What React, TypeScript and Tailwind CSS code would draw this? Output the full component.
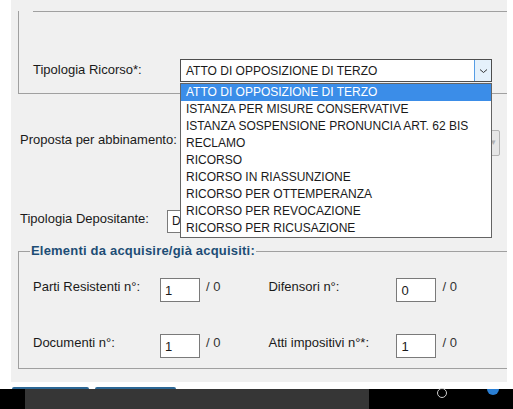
import React from 'react';

const ricorsoOptions = [
  'ATTO DI OPPOSIZIONE DI TERZO',
  'ISTANZA PER MISURE CONSERVATIVE',
  'ISTANZA SOSPENSIONE PRONUNCIA ART. 62 BIS',
  'RECLAMO',
  'RICORSO',
  'RICORSO IN RIASSUNZIONE',
  'RICORSO PER OTTEMPERANZA',
  'RICORSO PER REVOCAZIONE',
  'RICORSO PER RICUSAZIONE',
];

const Chevron: React.FC = () => (
  <svg width="9" height="6" viewBox="0 0 9 6" fill="none">
    <path d="M1 1.5 L4.5 4.5 L8 1.5" stroke="#333" strokeWidth="1" />
  </svg>
);

const CountField: React.FC<{ label: string; value: string; labelWidth: string; total: string }> = ({
  label,
  value,
  labelWidth,
  total,
}) => (
  <div className="flex items-start">
    <span className={`${labelWidth} mt-[1px] leading-[16px]`}>{label}</span>
    <div className="w-[40px] h-[24px] bg-white border border-[#7a7a7a] pl-[4px] pt-[4px] leading-[16px]">{value}</div>
    <span className="ml-[6px] mt-[1px] leading-[16px] text-[#333]">{total}</span>
  </div>
);

const App: React.FC = () => {
  return (
    <div className="relative w-[513px] h-[409px] overflow-hidden bg-white font-['Liberation_Sans',Arial,sans-serif] text-[13px] text-[#1a1a1a]">
      <div className="ml-[11px] w-[496px] h-[382px] bg-[#f0f0f0] overflow-hidden flex flex-col">
        {/* ricorso group */}
        <div className="ml-[7px] mt-[11px] h-[83px] shrink-0 border-l border-b border-[#a0a0a0] flex flex-col">
          <div className="ml-[14px] h-px bg-[#a0a0a0]" />
          <div className="mt-[47px] flex items-center pl-[14px]">
            <span className="w-[147px] -mt-[2px]">Tipologia Ricorso*:</span>
            <div className="w-[312px] h-[23px] bg-white border border-[#4d4d4d] flex text-[12px]">
              <span className="flex-1 pl-[5px] leading-[21px] pt-[1px]">ATTO DI OPPOSIZIONE DI TERZO</span>
              <div className="w-[17px] h-full bg-[#e5f1fb] border-l border-[#569de5] flex items-center justify-center">
                <Chevron />
              </div>
            </div>
          </div>
        </div>

        {/* abbinamento */}
        <div className="mt-[36px] h-[26px] shrink-0 flex items-start pl-[9px]">
          <span className="w-[160px] mt-[2px] leading-[16px]">Proposta per abbinamento:</span>
          <div className="w-[320px] h-[26px] bg-[#e6e6e6] border border-[#b4b4b4] rounded-[2px] flex items-center justify-end pr-[3px]">
            <span className="text-[9px] text-[#b0b0b0]">▾</span>
          </div>
        </div>

        {/* depositante */}
        <div className="mt-[54px] h-[23px] shrink-0 flex items-start pl-[9px]">
          <span className="w-[147px] mt-[1px] leading-[16px]">Tipologia Depositante:</span>
          <div className="w-[220px] h-[23px] bg-white border border-[#7a7a7a] pl-[4px] text-[12px] leading-[21px]">D</div>
        </div>

        {/* elementi */}
        <fieldset className="ml-[7px] mt-[10px] w-[520px] shrink-0 border-l border-t border-b border-[#a0a0a0] pb-[10px]">
          <legend className="ml-[11px] px-[1px] font-bold text-[#1d4d75] tracking-[0.2px] leading-[16px]">
            Elementi da acquisire/già acquisiti:
          </legend>
          <div className="mt-[19px] pl-[14px] flex flex-col gap-[32px]">
            <div className="flex">
              <CountField label="Parti Resistenti n°:" value="1" labelWidth="w-[127px]" total="/ 0" />
              <div className="w-[48px]" />
              <CountField label="Difensori n°:" value="0" labelWidth="w-[128px]" total="/ 0" />
            </div>
            <div className="flex">
              <CountField label="Documenti n°:" value="1" labelWidth="w-[127px]" total="/ 0" />
              <div className="w-[48px]" />
              <CountField label="Atti impositivi n°*:" value="1" labelWidth="w-[128px]" total="/ 0" />
            </div>
          </div>
        </fieldset>
      </div>

      {/* buttons peeking below the form */}
      <div className="h-[5px]" />
      <div className="flex h-[2px]">
        <div className="ml-[12px] w-[77px] bg-[#2c6795] rounded-t-[3px]" />
        <div className="ml-[6px] w-[81px] bg-[#2c6795] rounded-t-[3px]" />
      </div>

      {/* taskbar */}
      <div className="h-[20px] bg-black flex">
        <div className="w-[25px]" />
        <div className="w-[344px] bg-[#363636]" />
        <div className="flex-1 relative">
          <div className="absolute left-[68px] -top-[1px] w-[10px] h-[10px] rounded-full border border-[#cfcfcf]" />
          <div className="absolute left-[118px] top-0 w-[12px] h-[6px] rounded-b-full bg-[#2a7fd4]" />
        </div>
      </div>

      {/* open dropdown list */}
      <div className="absolute left-[180px] top-[83px] w-[312px] bg-white border border-[#646464] text-[12px]">
        {ricorsoOptions.map((opt, i) => (
          <div
            key={opt}
            className={
              i === 0
                ? 'h-[17px] leading-[17px] pl-[5px] bg-[#3b8de8] text-white'
                : 'h-[17px] leading-[17px] pl-[5px] text-[#1a1a1a]'
            }
          >
            {opt}
          </div>
        ))}
      </div>
    </div>
  );
};

export default App;
